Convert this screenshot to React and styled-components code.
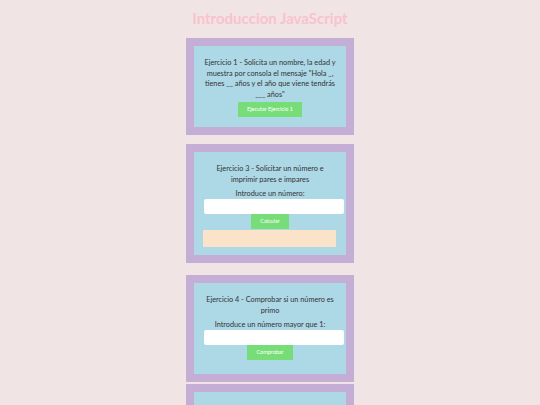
import styled, { createGlobalStyle } from 'styled-components';

const GlobalStyle = createGlobalStyle`
  body {
    margin: 0;
    background: #f1e4e4;
    font-family: Lato, "Open Sans", sans-serif;
    color: #333;
  }
`;

const Page = styled.main`
  display: flex;
  flex-direction: column;
  align-items: center;
  padding-top: 9px;
`;

const Title = styled.h1`
  margin: 0 0 11px;
  font-size: 15px;
  font-weight: 700;
  color: #f8c3cd;
  line-height: 18px;
`;

const Card = styled.section`
  width: 168px;
  box-sizing: border-box;
  padding: 8px;
  background: #c4aed5;
  margin-bottom: ${(p) => p.$gap ?? 10}px;
`;

const Inner = styled.div`
  background: #add8e6;
  padding: 12px 10px ${(p) => p.$pb ?? 10}px;
  min-height: ${(p) => p.$minH ?? 0}px;
  text-align: center;
`;

const Heading = styled.p`
  margin: 0;
  font-size: 7.3px;
  line-height: 10.7px;
`;

const Label = styled.p`
  margin: 4px 0 0;
  font-size: 7.3px;
  line-height: 9.6px;
`;

const Field = styled.input`
  display: block;
  width: 100%;
  height: 15px;
  margin: 0;
  padding: 0 4px;
  border: none;
  border-radius: 2px;
  background: #fff;
  font: inherit;
  font-size: 7px;
  outline: none;
`;

const Row = styled.div`
  display: flex;
  justify-content: center;
  margin-top: ${(p) => p.$mt ?? 0}px;
`;

const Button = styled.button`
  height: 15px;
  padding: 0 ${(p) => p.$px ?? 7}px;
  border: none;
  background: #77dd77;
  color: #fff;
  font-family: Lato, "Open Sans", sans-serif;
  font-size: 5.5px;
`;

const Result = styled.div`
  height: 17px;
  margin: 1px 0 0 -1px;
  background: #fbe3c9;
`;

export default function App() {
  return (
    <>
      <GlobalStyle />
      <Page>
        <Title>Introduccion JavaScript</Title>

        <Card $gap={9}>
          <Inner $pb={10}>
            <Heading>
              Ejercicio 1 - Solicita un nombre, la edad y muestra por consola el mensaje "Hola _,
              tienes __ años y el año que viene tendrás ___ años"
            </Heading>
            <Row $mt={1}>
              <Button $px={9}>Ejecutar Ejercicio 1</Button>
            </Row>
          </Inner>
        </Card>

        <Card $gap={12}>
          <Inner $pb={8}>
            <Heading>Ejercicio 3 - Solicitar un número e imprimir pares e impares</Heading>
            <Label>Introduce un número:</Label>
            <Field type="text" />
            <Row>
              <Button $px={9}>Calcular</Button>
            </Row>
            <Result />
          </Inner>
        </Card>

        <Card $gap={2}>
          <Inner $pb={14}>
            <Heading>Ejercicio 4 - Comprobar si un número es primo</Heading>
            <Label>Introduce un número mayor que 1:</Label>
            <Field type="text" />
            <Row>
              <Button $px={9}>Comprobar</Button>
            </Row>
          </Inner>
        </Card>

        <Card>
          <Inner $minH={60} />
        </Card>
      </Page>
    </>
  );
}
